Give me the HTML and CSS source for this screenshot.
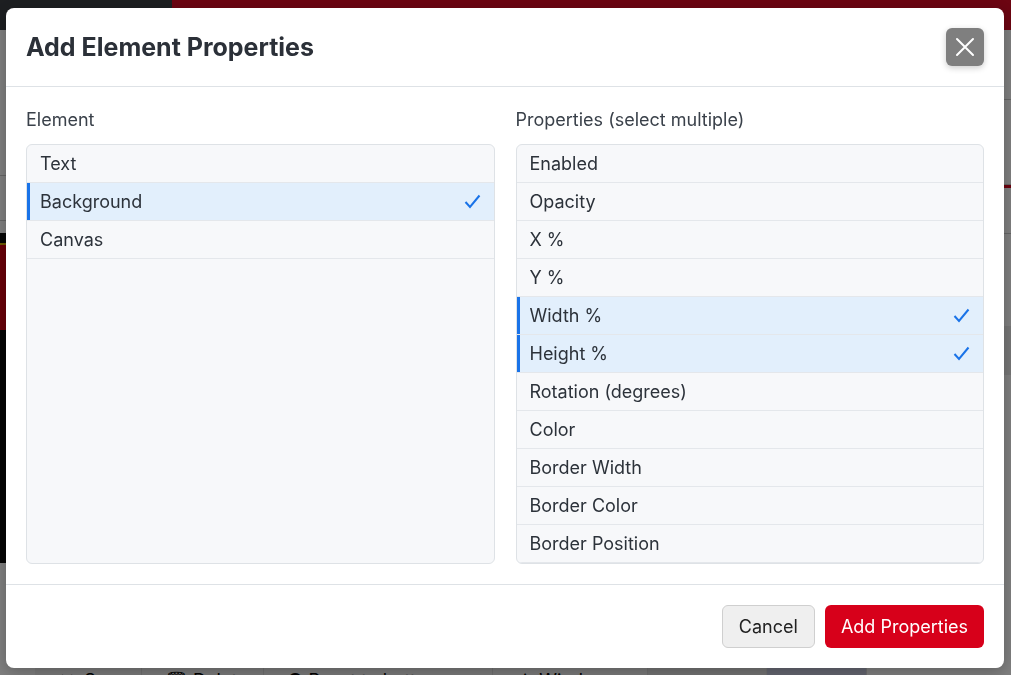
FILE: index.html
```html
<!DOCTYPE html>
<html lang="en">
<head>
    <meta charset="UTF-8">
    <meta name="viewport" content="width=device-width, initial-scale=1.0">
    <title>Editor - Add Element Properties</title>
    <link rel="stylesheet" href="styles.css">
</head>
<body>
    <div class="app">
        <header class="topbar">
            <div class="brand"></div>
            <div class="nav"></div>
        </header>

        <div class="workspace">
            <aside class="sidebar">
                <div class="side-text">Logo<br>Card</div>
                <div class="side-row"></div>
                <div class="preview">
                    <div class="preview-band"></div>
                </div>
            </aside>
            <main class="stage"></main>
            <aside class="inspector">
                <div class="insp-row"></div>
                <div class="insp-row"></div>
                <div class="insp-tab">Color</div>
                <div class="insp-text">Font<br>Position</div>
                <div class="insp-section">Box</div>
                <div class="insp-note">edit</div>
            </aside>
        </div>

        <footer class="toolbar">
            <button class="tool">↔ Save</button>
            <button class="tool">🗑 Delete</button>
            <button class="tool">● Reset to button</button>
            <button class="tool">▲ Window</button>
            <button class="tool tool-grey"></button>
            <button class="tool tool-blue"></button>
        </footer>
    </div>

    <div class="overlay">
        <div class="modal">
            <div class="modal-header">
                <h2 class="modal-title">Add Element Properties</h2>
                <button class="btn-close" aria-label="Close">
                    <svg width="20" height="20" viewBox="0 0 20 20"><path d="M2 2 L18 18 M18 2 L2 18" stroke="#fff" stroke-width="2" stroke-linecap="round"/></svg>
                </button>
            </div>

            <div class="modal-body">
                <div class="field">
                    <label class="field-label">Element</label>
                    <ul class="pick-list">
                        <li class="pick-item">Text</li>
                        <li class="pick-item selected">Background</li>
                        <li class="pick-item">Canvas</li>
                    </ul>
                </div>
                <div class="field">
                    <label class="field-label">Properties (select multiple)</label>
                    <ul class="pick-list">
                        <li class="pick-item">Enabled</li>
                        <li class="pick-item">Opacity</li>
                        <li class="pick-item">X %</li>
                        <li class="pick-item">Y %</li>
                        <li class="pick-item selected">Width %</li>
                        <li class="pick-item selected">Height %</li>
                        <li class="pick-item">Rotation (degrees)</li>
                        <li class="pick-item">Color</li>
                        <li class="pick-item">Border Width</li>
                        <li class="pick-item">Border Color</li>
                        <li class="pick-item">Border Position</li>
                    </ul>
                </div>
            </div>

            <div class="modal-footer">
                <button class="btn btn-secondary">Cancel</button>
                <button class="btn btn-primary">Add Properties</button>
            </div>
        </div>
    </div>
</body>
</html>
```

FILE: styles.css
```css
:root {
    --brand-red: #d7001a;
    --select-blue: #1a73e8;
    --select-bg: #e2effc;
    --list-bg: #f7f8fa;
    --line: #dee2e6;
    --text: #2c323a;
    --radius: 6px;
}

* {
    box-sizing: border-box;
}

body {
    margin: 0;
    height: 675px;
    overflow: hidden;
    font-family: Inter, 'Noto Sans', sans-serif;
    color: var(--text);
    background-color: #fff;
}

/* app behind the dialog */

.app {
    display: flex;
    flex-direction: column;
    height: 700px;
}

.topbar {
    display: flex;
    height: 30px;
}

.brand {
    width: 172px;
    background-color: #3a3e43;
}

.nav {
    flex: 1;
    background-color: #d80a24;
}

.workspace {
    flex: 1;
    display: flex;
}

.sidebar {
    width: 240px;
    padding-top: 69px;
}

.side-text {
    font-size: 18px;
    line-height: 26px;
    padding: 0 6px;
    text-align: right;
}

.side-row {
    height: 46px;
    margin-top: 24px;
    border-top: 1px solid #ccc;
    border-bottom: 1px solid #ccc;
}

.preview {
    height: 330px;
    margin-top: 12px;
    background-color: #0a0a0a;
    padding-top: 10px;
}

.preview-band {
    height: 87px;
    background-color: #d00010;
    border-top: 2px solid #d8b400;
}

.stage {
    flex: 1;
    background-color: #f2f2f2;
}

.inspector {
    width: 250px;
    padding-top: 26px;
    font-size: 18px;
}

.insp-row {
    height: 44px;
    border-bottom: 1px solid #ccc;
}

.insp-row + .insp-row {
    height: 85px;
}

.insp-tab {
    border-top: 3px solid var(--brand-red);
    border-bottom: 1px solid #ccc;
    padding: 12px 0 12px 4px;
}

.insp-text {
    line-height: 26px;
    padding: 18px 0 22px 4px;
}

.insp-section {
    font-weight: 700;
    background-color: #ececec;
    padding: 18px 0 10px 4px;
}

.insp-note {
    font-size: 13px;
    padding: 4px 0 0 6px;
}

.toolbar {
    display: flex;
    height: 40px;
    padding-left: 35px;
    background-color: #fff;
}

.tool {
    font: inherit;
    font-size: 18px;
    background: #f4f4f4;
    border: none;
    border-right: 1px solid #ddd;
    padding: 10px 20px 10px 23px;
    text-align: left;
    white-space: nowrap;
    overflow: hidden;
}

.tool:nth-child(1) { width: 107px; padding-left: 20px; }
.tool:nth-child(2) { width: 122px; }
.tool:nth-child(3) { width: 229px; }
.tool:nth-child(4) { width: 155px; }

.tool-grey {
    width: 119px;
    background-color: #e6e6e6;
}

.tool-blue {
    width: 100px;
    background-color: #c8cbe0;
}

/* dialog */

.overlay {
    position: fixed;
    inset: 0;
    background-color: rgba(0, 0, 0, 0.5);
    display: flex;
    align-items: flex-start;
    padding: 8px 0 0 6px;
}

.modal {
    width: 998px;
    background-color: #fff;
    border-radius: 8px;
    box-shadow: 0 4px 16px rgba(0, 0, 0, 0.25);
}

.modal-header {
    display: flex;
    align-items: center;
    justify-content: space-between;
    padding: 20px;
    border-bottom: 1px solid var(--line);
}

.modal-title {
    margin: 0;
    font-size: 25px;
    line-height: 30px;
    font-weight: 700;
    color: #2b3038;
}

.btn-close {
    width: 38px;
    height: 38px;
    border: none;
    border-radius: var(--radius);
    background-color: #7f7f7f;
    box-shadow: 0 2px 6px rgba(0, 0, 0, 0.2);
    display: flex;
    align-items: center;
    justify-content: center;
    padding: 0;
}

.modal-body {
    display: grid;
    grid-template-columns: 1fr 1fr;
    gap: 21px;
    padding: 21px 20px 20px;
}

.field {
    display: flex;
    flex-direction: column;
}

.field-label {
    font-size: 18px;
    line-height: 24px;
    margin-bottom: 12px;
    color: #3a414a;
}

.pick-list {
    flex: 1;
    list-style: none;
    margin: 0;
    padding: 0;
    height: 420px;
    background-color: var(--list-bg);
    border: 1px solid var(--line);
    border-radius: var(--radius);
    overflow: hidden;
}

.pick-item {
    display: flex;
    justify-content: space-between;
    align-items: center;
    font-size: 18px;
    line-height: 23px;
    padding: 7px 13px;
    border-bottom: 1px solid #e4e7eb;
}

.pick-item.selected {
    background-color: var(--select-bg);
    box-shadow: inset 3px 0 0 var(--select-blue);
}

.pick-item.selected::after {
    content: "";
    width: 17px;
    height: 15px;
    background: url("data:image/svg+xml,%3Csvg xmlns='http://www.w3.org/2000/svg' width='17' height='15' viewBox='0 0 17 15'%3E%3Cpath d='M1.5 8 L6 13 L15.5 1.5' fill='none' stroke='%231a73e8' stroke-width='2'/%3E%3C/svg%3E") no-repeat;
}

.modal-footer {
    display: flex;
    justify-content: flex-end;
    gap: 10px;
    padding: 20px;
    border-top: 1px solid var(--line);
}

.btn {
    font: inherit;
    font-size: 18px;
    line-height: 25px;
    padding: 8px 15px;
    border-radius: var(--radius);
    border: 1px solid transparent;
    cursor: pointer;
}

.btn-secondary {
    padding: 8px 16px;
    background-color: #efefef;
    border-color: #cfcfcf;
    color: #222;
}

.btn-primary {
    background-color: var(--brand-red);
    color: #fff;
}
```
